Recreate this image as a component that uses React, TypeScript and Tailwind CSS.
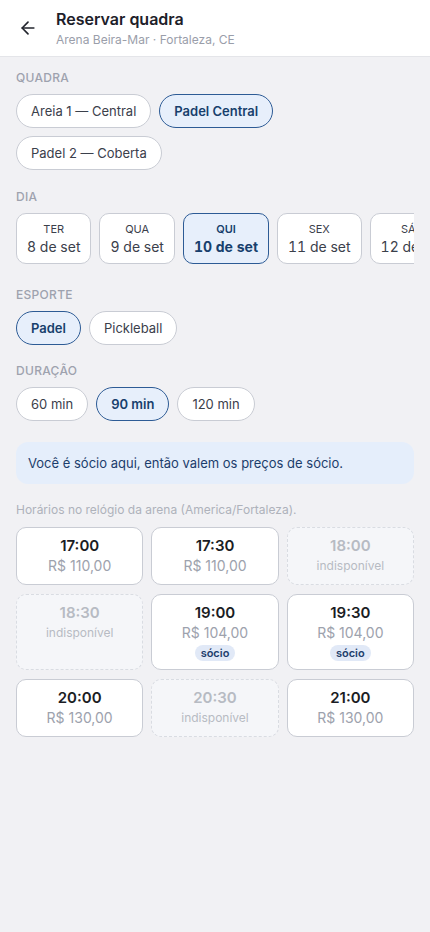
import { ArrowLeft } from "lucide-react";

const courts = [
  { name: "Areia 1 — Central", active: false },
  { name: "Padel Central", active: true },
  { name: "Padel 2 — Coberta", active: false },
];

const days = [
  { wd: "TER", date: "8 de set" },
  { wd: "QUA", date: "9 de set" },
  { wd: "QUI", date: "10 de set", active: true },
  { wd: "SEX", date: "11 de set" },
  { wd: "SÁB", date: "12 de set" },
  { wd: "DOM", date: "13 de set" },
];

type Slot = { time: string; price?: string; member?: boolean };

const slots: Slot[] = [
  { time: "17:00", price: "R$ 110,00" },
  { time: "17:30", price: "R$ 110,00" },
  { time: "18:00" },
  { time: "18:30" },
  { time: "19:00", price: "R$ 104,00", member: true },
  { time: "19:30", price: "R$ 104,00", member: true },
  { time: "20:00", price: "R$ 130,00" },
  { time: "20:30" },
  { time: "21:00", price: "R$ 130,00" },
];

function Chip({ label, active }: { label: string; active?: boolean }) {
  return (
    <button
      className={
        active
          ? "rounded-full border border-[#2d5b95] bg-[#e7effb] px-[14px] py-[6px] text-[13px] leading-5 font-semibold text-[#183f6d]"
          : "rounded-full border border-[#c9ccd4] bg-white px-[14px] py-[6px] text-[13px] leading-5 text-[#3b404b]"
      }
    >
      {label}
    </button>
  );
}

function Label({ children }: { children: string }) {
  return (
    <div className="mb-2 text-xs leading-4 font-medium tracking-wide text-[#9ea2ae] uppercase">
      {children}
    </div>
  );
}

export default function App() {
  return (
    <div
      className="min-h-[932px] bg-[#f1f1f4]"
      style={{ fontFamily: "Inter, 'Noto Sans', sans-serif" }}
    >
      <header className="flex h-[57px] items-center gap-3 border-b border-[#e4e5e9] bg-white px-3">
        <button className="flex h-8 w-8 items-center justify-center text-[#23262e]">
          <ArrowLeft className="h-5 w-5" strokeWidth={2} />
        </button>
        <div className="flex flex-col">
          <h1 className="text-base leading-5 font-semibold text-[#1d2029]">Reservar quadra</h1>
          <p className="mt-[3px] text-xs leading-4 text-[#9a9eaa]">Arena Beira-Mar · Fortaleza, CE</p>
        </div>
      </header>

      <main className="px-4 pt-[13px]">
        <section>
          <Label>Quadra</Label>
          <div className="flex flex-wrap gap-2">
            {courts.map((c) => (
              <Chip key={c.name} label={c.name} active={c.active} />
            ))}
          </div>
        </section>

        <section className="mt-[19px]">
          <Label>Dia</Label>
          <div className="flex gap-2 overflow-hidden pb-1">
            {days.map((d) => (
              <button
                key={d.date}
                className={
                  d.active
                    ? "flex shrink-0 flex-col items-center rounded-[10px] border border-[#2d5b95] bg-[#e7effb] px-[10px] pt-[7px] pb-[6px] text-[#183f6d] tabular-nums"
                    : "flex shrink-0 flex-col items-center rounded-[10px] border border-[#c9ccd4] bg-white px-[10px] pt-[7px] pb-[6px] text-[#3b404b] tabular-nums"
                }
              >
                <span className={d.active ? "text-[11px] leading-4 font-semibold" : "text-[11px] leading-4"}>{d.wd}</span>
                <span className={d.active ? "text-sm leading-5 font-bold" : "text-sm leading-5"}>{d.date}</span>
              </button>
            ))}
          </div>
        </section>

        <section className="mt-[19px]">
          <Label>Esporte</Label>
          <div className="flex gap-2">
            <Chip label="Padel" active />
            <Chip label="Pickleball" />
          </div>
        </section>

        <section className="mt-[18px]">
          <Label>Duração</Label>
          <div className="flex gap-2">
            <Chip label="60 min" />
            <Chip label="90 min" active />
            <Chip label="120 min" />
          </div>
        </section>

        <div className="mt-[21px] rounded-xl bg-[#e5eefb] px-3 py-[11px] text-[13px] leading-5 text-[#1c3d6c]">
          Você é sócio aqui, então valem os preços de sócio.
        </div>

        <p className="mt-[18px] text-xs leading-4 text-[#aeb2bb]">
          Horários no relógio da arena (America/Fortaleza).
        </p>

        <div className="mt-[9px] grid grid-cols-3 gap-x-2 gap-y-[9px]">
          {slots.map((s) =>
            s.price ? (
              <button
                key={s.time}
                className="flex flex-col items-center rounded-[10px] border border-[#c9ccd4] bg-white pt-2 pb-2"
              >
                <span className="text-[15px] leading-5 font-semibold text-[#1b1d24]">{s.time}</span>
                <span className="text-sm leading-5 text-[#9da2ad]">{s.price}</span>
                {s.member && (
                  <span className="mt-0.5 rounded-full bg-[#e1e9f7] px-1.5 text-[11px] leading-4 font-semibold text-[#1e3f6d]">
                    sócio
                  </span>
                )}
              </button>
            ) : (
              <div
                key={s.time}
                className="flex flex-col items-center rounded-[10px] border border-dashed border-[#d9dce2] bg-[#f5f6f9] pt-2 pb-2"
              >
                <span className="text-[15px] leading-5 font-semibold text-[#b7bbc3]">{s.time}</span>
                <span className="text-xs leading-5 text-[#b7bbc3]">indisponível</span>
              </div>
            )
          )}
        </div>
      </main>
    </div>
  );
}
